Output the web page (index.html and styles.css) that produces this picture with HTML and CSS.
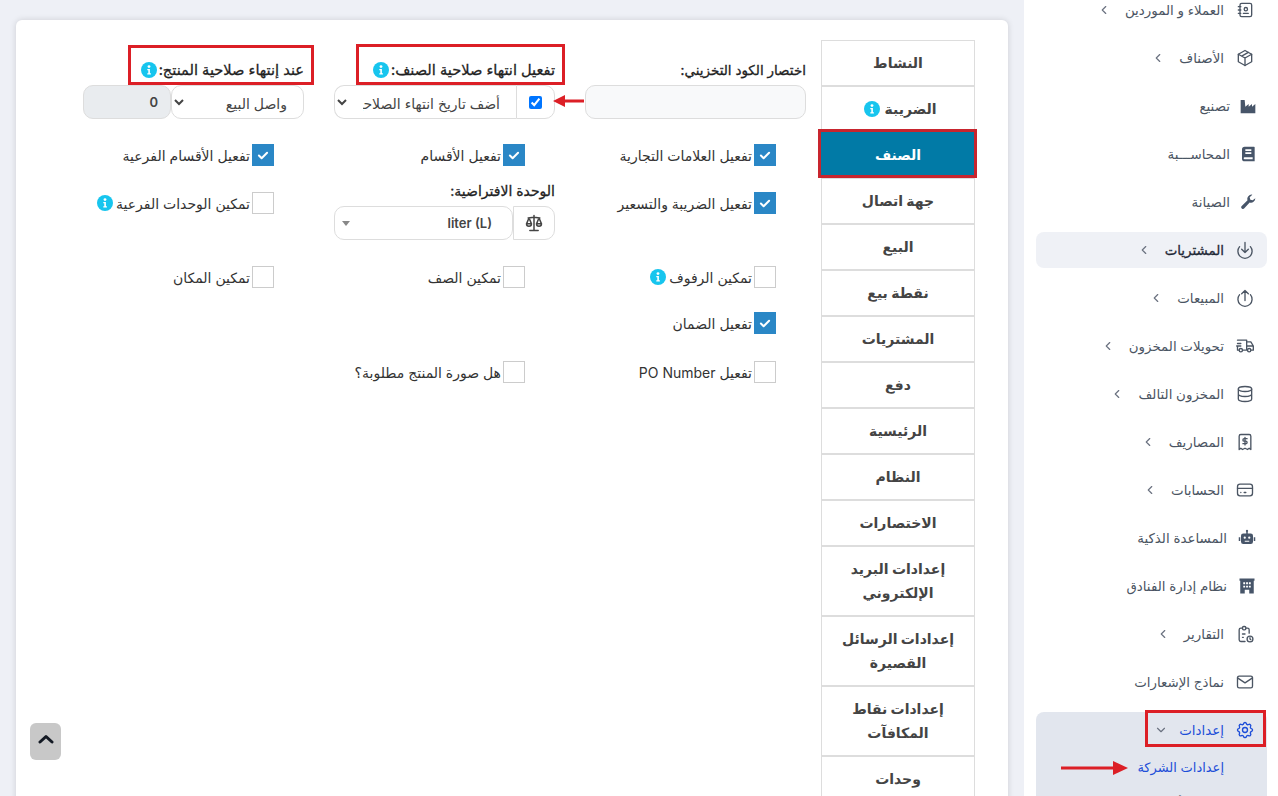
FILE: index.html
```html
<!DOCTYPE html>
<html lang="ar" dir="rtl">
<head>
<meta charset="utf-8">
<title>إعدادات الشركة</title>
<link rel="stylesheet" href="styles.css">
</head>
<body>
<svg width="0" height="0" class="defs">
  <symbol id="info" viewBox="0 0 16 16"><circle cx="8" cy="8" r="8" fill="#17c5ee"/><circle cx="8" cy="4.6" r="1.4" fill="#fff"/><path d="M6.3 7h2.6v4.2h1v1.3H6.3v-1.3h1V8.300H6.300z" fill="#fff"/></symbol>
  <symbol id="tick" viewBox="0 0 22 22"><path d="M6.500 11.500l3 3 6-6" fill="none" stroke="#fff" stroke-width="2.200" stroke-linecap="round" stroke-linejoin="round"/></symbol>
  <symbol id="chev" viewBox="0 0 24 24"><path d="M15 6l-6 6 6 6" fill="none" stroke="currentColor" stroke-width="2" stroke-linecap="round" stroke-linejoin="round"/></symbol>
</svg>

<aside class="sidebar">
  <ul class="nav">
    <li class="nav-item"><svg class="ico" viewBox="0 0 24 24"><path d="M20 6v12a2 2 0 0 1-2 2H8a2 2 0 0 1-2-2V6a2 2 0 0 1 2-2h10a2 2 0 0 1 2 2z"/><path d="M10 16h6"/><circle cx="13" cy="11" r="2"/><path d="M4 8h3M4 12h3M4 16h3"/></svg><span>العملاء و الموردين</span><svg class="chev"><use href="#chev"/></svg></li>
    <li class="nav-item"><svg class="ico" viewBox="0 0 24 24"><path d="M12 3l8 4.500v9L12 21l-8-4.500v-9z"/><path d="M12 12l8-4.500M12 12v9M12 12L4 7.500M16 5.250L8 9.750"/></svg><span>الأصناف</span><svg class="chev"><use href="#chev"/></svg></li>
    <li class="nav-item wide"><svg class="ico fill" viewBox="0 0 24 24"><path d="M1 3h6l1 10 5-4v4l5-4v4l5-4v14H1z"/></svg><span>تصنيع</span></li>
    <li class="nav-item wide"><svg class="ico fill" viewBox="0 0 24 24"><path d="M7 1h14a1 1 0 0 1 1 1v21H7a4 4 0 0 1-4-4V5a4 4 0 0 1 4-4zm1 4v2.500h9V5zm0 4.500V12h9V9.500zM7 17a1.500 1.500 0 0 0 0 3h12v-3z" fill-rule="evenodd"/></svg><span>المحاســـبة</span></li>
    <li class="nav-item wide"><svg class="ico fill" viewBox="0 0 24 24"><path d="M23 6.500a6.500 6.500 0 0 1-8.500 6.200L6.500 21.500a2.600 2.600 0 0 1-3.900-3.600l8.700-8.400A6.500 6.500 0 0 1 18.500 1L14.500 5l1 3.500 3.500 1z"/></svg><span>الصيانة</span></li>
    <li class="nav-item soft"><svg class="ico" viewBox="0 0 24 24"><path d="M12 3v12M8 11l4 4 4-4"/><path d="M5.500 8a8.500 8.500 0 1 0 13 0"/></svg><span class="dark">المشتريات</span><svg class="chev"><use href="#chev"/></svg></li>
    <li class="nav-item"><svg class="ico" viewBox="0 0 24 24"><path d="M12 15V3M8 7l4-4 4 4"/><path d="M5.500 8a8.500 8.500 0 1 0 13 0"/></svg><span>المبيعات</span><svg class="chev"><use href="#chev"/></svg></li>
    <li class="nav-item"><svg class="ico" viewBox="0 0 24 24"><circle cx="7" cy="17" r="2"/><circle cx="17" cy="17" r="2"/><path d="M5 17H3v-4M3 5h11v12M9 17h6M14 7h5l3 5v5h-3M14 12h8M3 9h4M2 12h5"/></svg><span>تحويلات المخزون</span><svg class="chev"><use href="#chev"/></svg></li>
    <li class="nav-item"><svg class="ico" viewBox="0 0 24 24"><ellipse cx="12" cy="6" rx="8" ry="3"/><path d="M4 6v6c0 1.700 3.600 3 8 3s8-1.300 8-3V6M4 12v6c0 1.700 3.600 3 8 3s8-1.300 8-3v-6"/></svg><span>المخزون التالف</span><svg class="chev"><use href="#chev"/></svg></li>
    <li class="nav-item"><svg class="ico" viewBox="0 0 24 24"><path d="M5 21V5a2 2 0 0 1 2-2h10a2 2 0 0 1 2 2v16l-2-1.500-2 1.500-3-1.500L9 21l-2-1.500z"/><path d="M14.500 8H11a1.500 1.500 0 0 0 0 3h2a1.500 1.500 0 0 1 0 3H9.500M12 6.500v9"/></svg><span>المصاريف</span><svg class="chev"><use href="#chev"/></svg></li>
    <li class="nav-item"><svg class="ico" viewBox="0 0 24 24"><rect x="3" y="5" width="18" height="14" rx="3"/><path d="M3 10h18M7 15h.01M11 15h2"/></svg><span>الحسابات</span><svg class="chev"><use href="#chev"/></svg></li>
    <li class="nav-item wide large"><svg class="ico fill" viewBox="0 0 24 24"><path d="M12 1a1.500 1.500 0 0 1 1 2.600V6h4a3 3 0 0 1 3 3v8a3 3 0 0 1-3 3H7a3 3 0 0 1-3-3V9a3 3 0 0 1 3-3h4V3.600A1.500 1.500 0 0 1 12 1zM9 10a1.500 1.500 0 1 0 0 3 1.500 1.500 0 0 0 0-3zm6 0a1.500 1.500 0 1 0 0 3 1.500 1.500 0 0 0 0-3zM9 15.500v1.500h6v-1.500zM1 11h2v5H1zM21 11h2v5h-2z" fill-rule="evenodd"/></svg><span>المساعدة الذكية</span></li>
    <li class="nav-item wide large"><svg class="ico fill" viewBox="0 0 24 24"><path d="M2 2h20v3h-1v17h-6v-5H9v5H3V5H2zm5 5v2.500h2.500V7zm3.800 0v2.500h2.500V7zm3.700 0v2.500H17V7zM7 11.500V14h2.500v-2.500zm3.800 0V14h2.500v-2.500zm3.700 0V14H17v-2.500z" fill-rule="evenodd"/></svg><span>نظام إدارة الفنادق</span></li>
    <li class="nav-item"><svg class="ico" viewBox="0 0 24 24"><path d="M9 5H7a2 2 0 0 0-2 2v12a2 2 0 0 0 2 2h5M17 11V7a2 2 0 0 0-2-2h-2"/><rect x="9" y="3" width="4" height="4" rx="1.500"/><path d="M9 12h3M9 16h1"/><circle cx="18" cy="18" r="3.500"/><path d="M18 16.500V18l1 .8"/></svg><span>التقارير</span><svg class="chev"><use href="#chev"/></svg></li>
    <li class="nav-item"><svg class="ico" viewBox="0 0 24 24"><rect x="3" y="5" width="18" height="14" rx="2"/><path d="M3 7l9 6 9-6"/></svg><span>نماذج الإشعارات</span></li>
    <li class="group">
      <div class="nav-item current"><svg class="ico" viewBox="0 0 24 24"><path d="M10.300 4.300c.4-1.800 3-1.800 3.400 0a1.700 1.700 0 0 0 2.600 1.100c1.500-1 3.400.9 2.400 2.400a1.700 1.700 0 0 0 1 2.600c1.800.4 1.800 3 0 3.400a1.700 1.700 0 0 0-1 2.600c1 1.500-.9 3.400-2.400 2.400a1.700 1.700 0 0 0-2.600 1c-.4 1.800-3 1.800-3.400 0a1.700 1.700 0 0 0-2.600-1c-1.500 1-3.400-.9-2.400-2.400a1.700 1.700 0 0 0-1-2.600c-1.800-.4-1.800-3 0-3.400a1.700 1.700 0 0 0 1-2.600c-1-1.500.9-3.400 2.400-2.400a1.700 1.700 0 0 0 2.600-1.100z"/><circle cx="12" cy="12" r="3"/></svg><span>إعدادات</span><svg class="chev down"><use href="#chev"/></svg></div>
      <div class="sub-item current-sub">إعدادات الشركة</div>
      <div class="sub-item next-sub">مواقع الأعمال</div>
    </li>
  </ul>
</aside>

<main class="main">
  <div class="card">
    <nav class="tabs">
      <a class="tab">النشاط</a>
      <a class="tab">الضريبة <svg class="info"><use href="#info"/></svg></a>
      <a class="tab active">الصنف</a>
      <a class="tab">جهة اتصال</a>
      <a class="tab">البيع</a>
      <a class="tab">نقطة بيع</a>
      <a class="tab">المشتريات</a>
      <a class="tab">دفع</a>
      <a class="tab">الرئيسية</a>
      <a class="tab">النظام</a>
      <a class="tab">الاختصارات</a>
      <a class="tab">إعدادات البريد الإلكتروني</a>
      <a class="tab">إعدادات الرسائل القصيرة</a>
      <a class="tab">إعدادات نقاط المكافآت</a>
      <a class="tab">وحدات</a>
    </nav>

    <form class="form">
      <div class="row row-1">
        <div class="field">
          <label class="label">اختصار الكود التخزيني:</label>
          <input class="input" type="text">
        </div>
        <div class="field">
          <label class="label lg">تفعيل انتهاء صلاحية الصنف: <svg class="info"><use href="#info"/></svg></label>
          <div class="group-ctl">
            <span class="addon addon-check"><input type="checkbox" checked></span>
            <select class="select select-fill"><option>أضف تاريخ انتهاء الصلاحية</option></select>
          </div>
        </div>
        <div class="field">
          <label class="label lg">عند إنتهاء صلاحية المنتج: <svg class="info"><use href="#info"/></svg></label>
          <div class="group-ctl">
            <select class="select select-sale"><option>واصل البيع</option></select>
            <input class="input number" type="text" value="0" disabled>
          </div>
        </div>
      </div>

      <div class="row row-2">
        <label class="check"><span class="box on"><svg><use href="#tick"/></svg></span>تفعيل العلامات التجارية</label>
        <label class="check"><span class="box on"><svg><use href="#tick"/></svg></span>تفعيل الأقسام</label>
        <label class="check"><span class="box on"><svg><use href="#tick"/></svg></span>تفعيل الأقسام الفرعية</label>
      </div>

      <div class="row row-3">
        <label class="check offset"><span class="box on"><svg><use href="#tick"/></svg></span>تفعيل الضريبة والتسعير</label>
        <div class="field">
          <label class="label unit">الوحدة الافتراضية:</label>
          <div class="group-ctl">
            <span class="addon addon-unit"><svg class="scale" viewBox="0 0 24 24"><path d="M7 21h10M5 6l7-1 7 1M12 3v18M9 13L6 6l-3 7h6a3 3 0 0 1-6 0M21 13l-3-7-3 7h6a3 3 0 0 1-6 0"/></svg></span>
            <div class="select2"><span>liter (L)</span><i class="caret"></i></div>
          </div>
        </div>
        <label class="check offset"><span class="box"></span>تمكين الوحدات الفرعية <svg class="info"><use href="#info"/></svg></label>
      </div>

      <div class="row row-4">
        <label class="check"><span class="box"></span>تمكين الرفوف <svg class="info"><use href="#info"/></svg></label>
        <label class="check"><span class="box"></span>تمكين الصف</label>
        <label class="check"><span class="box"></span>تمكين المكان</label>
      </div>

      <div class="row row-5">
        <label class="check"><span class="box on"><svg><use href="#tick"/></svg></span>تفعيل الضمان</label>
      </div>

      <div class="row row-6">
        <label class="check"><span class="box"></span>تفعيل PO Number</label>
        <label class="check"><span class="box"></span>هل صورة المنتج مطلوبة؟</label>
      </div>
    </form>
  </div>
  <button class="to-top" type="button"><svg viewBox="0 0 16 10"><path d="M2 8l6-5.500L14 8" fill="none" stroke="#141a24" stroke-width="3" stroke-linecap="round" stroke-linejoin="round"/></svg></button>
</main>

<svg class="marks" viewBox="0 0 1278 796">
  <g fill="none" stroke="#dc1f26" stroke-width="3">
    <rect x="129.500" y="46.500" width="183" height="37"/>
    <rect x="357.500" y="45.500" width="206" height="38"/>
    <rect x="819.500" y="130.500" width="156" height="46" stroke="#c8252e"/>
    <rect x="1146.500" y="711.500" width="118" height="34"/>
  </g>
  <g fill="#dc1f26">
    <rect x="562" y="99.500" width="22" height="3"/><path d="M553 101l12-6v12z"/>
    <rect x="1061" y="766.500" width="54" height="3"/><path d="M1128 768l-15-7v14z"/>
  </g>
</svg>
</body>
</html>
```
FILE: styles.css
```css
* { box-sizing: border-box; }
html, body { margin: 0; height: 796px; overflow: hidden; }
body {
  display: flex;
  position: relative;
  background: #eef0f6;
  color: #333;
  font-family: Inter, "DejaVu Sans", sans-serif;
  font-size: 13px;
}
.defs { position: absolute; }

/* sidebar */
.sidebar { width: 254px; flex: none; height: 796px; background: #fff; overflow: hidden; padding: 0 11px 0 12px; }
.nav { list-style: none; margin: -8px 0 0; padding: 0; display: flex; flex-direction: column; gap: 12px; }
.nav-item {
  height: 36px; display: flex; align-items: center; gap: 11px;
  padding: 0 12px; color: #4b5563; font-size: 13.400px; border-radius: 8px;
}
.nav-item.wide { gap: 10px; padding-right: 11px; }
.nav-item.wide .ico { width: 16px; height: 16px; }
.nav-item.large { gap: 11px; }
.nav-item.large .ico { width: 18px; height: 18px; }
.nav-item.soft { background: #eff1f6; }
.dark { color: #1f2937; -webkit-text-stroke: .3px #1f2937; }
.ico { width: 20px; height: 20px; flex: none; fill: none; stroke: #4b5563; stroke-width: 1.600; stroke-linecap: round; stroke-linejoin: round; }
.ico.fill { fill: #475569; stroke: none; }
.chev { width: 14px; height: 14px; flex: none; margin-right: 3px; color: #6b7280; }
.chev.down { transform: rotate(-90deg); margin-right: 0; }
.group { background: #e2e6ee; border-radius: 8px 8px 0 0; color: #1d4ed8; }
.current { color: #1d4ed8; }
.current .ico { stroke: #1d4ed8; }
.sub-item { height: 28px; display: flex; align-items: center; padding-right: 43px; margin-top: 5px; font-size: 13px; color: #374151; }
.current-sub { color: #1d4ed8; }
.next-sub { margin-top: 8px; }

/* main */
.main { width: 1024px; flex: none; height: 796px; padding: 20px 16px 0; overflow: hidden; }
.card {
  display: flex; height: 900px; background: #fff; border-radius: 6px;
  box-shadow: 0 0 6px rgba(0,0,0,.14);
  padding: 20px 33px 0 52px;
}
.tabs { width: 154px; flex: none; display: flex; flex-direction: column; }
.tab {
  display: flex; align-items: center; justify-content: center; gap: 4px;
  min-height: 46px; padding: 10px 14px; text-align: center;
  border: 1px solid #ddd; background: #fff;
  color: #444; font-size: 14px; font-weight: 700; line-height: 24px;
}
.tab .info { margin-left: 5px; }
.tab.active { background: #017aa6; color: #fff; border-color: #017aa6; }
.info { width: 16px; height: 16px; flex: none; vertical-align: -3px; }

/* form */
.form { flex: 1; padding: 20px 15px 0; min-width: 0; }
.row { display: grid; grid-template-columns: repeat(3, 221px); column-gap: 30px; align-items: start; }
.row-2 { margin-top: 25px; }
.row-3 { margin-top: 15px; }
.row-4 { margin-top: 26px; }
.row-5 { margin-top: 24px; }
.row-6 { margin-top: 27px; }
.field { display: flex; flex-direction: column; min-width: 0; }
.label { display: block; height: 20px; line-height: 20px; margin-bottom: 5px; font-size: 13.500px; color: #222; -webkit-text-stroke: .3px #222; white-space: nowrap; }
.label.lg { font-size: 14.600px; }
.label.unit { font-size: 14px; }
.label .info { margin-right: -2px; }
.input { height: 34px; width: 100%; border: 1px solid #ddd; border-radius: 10px; background: #f8f9fa; padding: 0 12px; font: inherit; }
.group-ctl { display: flex; height: 34px; }
.addon { display: flex; align-items: center; justify-content: center; flex: none; background: #fff; border: 1px solid #ddd; }
.addon-check { width: 39px; border-radius: 0 10px 10px 0; }
.addon-check input { margin: 0; width: 13px; height: 13px; }
.addon-unit { width: 42px; border-radius: 0 10px 10px 0; }
.scale { width: 20px; height: 20px; fill: none; stroke: #444; stroke-width: 1.800; stroke-linecap: round; stroke-linejoin: round; }
.select { height: 34px; min-width: 0; border: 1px solid #ddd; background: #fff; color: #444; font-family: inherit; font-size: 14px; padding: 2px 12px 0 4px; }
.select-fill { flex: 1; width: 182px; border-right: 0; border-radius: 10px 0 0 10px; padding-left: 12px; }
.select-sale { width: 133px; flex: none; border-radius: 10px; }
.number { flex: 1; width: 88px; border-radius: 10px; background: #e9ecef; color: #444; font-weight: 600; font-size: 13px; padding-right: 12px; padding-left: 12px; direction: ltr; text-align: right; }
.select2 { flex: 1; border: 1px solid #ddd; border-radius: 10px; display: flex; align-items: center; justify-content: space-between; padding: 0 20px 0 7px; font-size: 13px; font-weight: 600; color: #444; }
.caret { width: 0; height: 0; border-top: 5px solid #888; border-left: 4px solid transparent; border-right: 4px solid transparent; }
.check { display: flex; align-items: center; gap: 2px; height: 22px; padding-right: 30px; font-size: 14px; color: #333; white-space: nowrap; }
.check .info { margin-right: 1px; }
.check.offset { margin-top: 11px; }
.box { width: 22px; height: 22px; flex: none; border: 1px solid #ccc; background: #fff; display: block; }
.box.on { background: #2a87c6; border-color: #2a87c6; }
.box svg { display: block; width: 20px; height: 20px; }

.to-top { position: absolute; left: 30px; top: 723px; width: 31px; height: 37px; padding: 0; border: 0; border-radius: 6px; background: #c8c8c8; display: flex; align-items: center; justify-content: center; }
.to-top svg { width: 16px; height: 10px; margin-top: -5px; }
.marks { position: absolute; left: 0; top: 0; width: 1278px; height: 796px; pointer-events: none; }
```
